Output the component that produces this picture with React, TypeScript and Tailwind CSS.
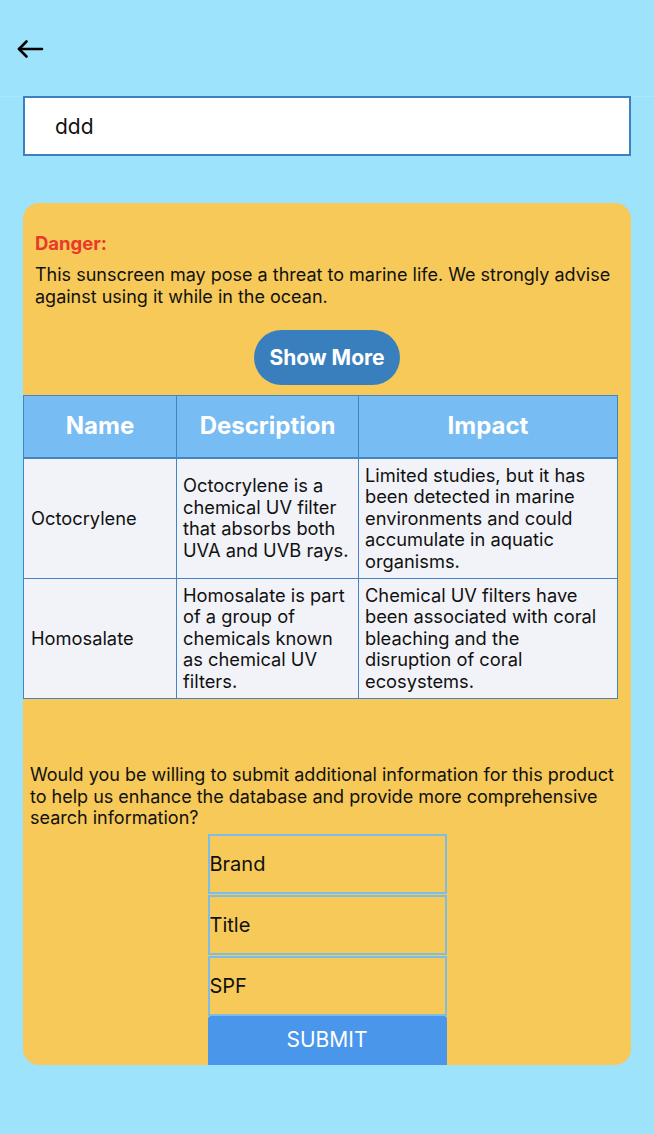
import { useState } from "react";

const rows = [
  {
    name: "Octocrylene",
    description: "Octocrylene is a chemical UV filter that absorbs both UVA and UVB rays.",
    impact:
      "Limited studies, but it has been detected in marine environments and could accumulate in aquatic organisms.",
  },
  {
    name: "Homosalate",
    description: "Homosalate is part of a group of chemicals known as chemical UV filters.",
    impact:
      "Chemical UV filters have been associated with coral bleaching and the disruption of coral ecosystems.",
  },
];

export default function App() {
  const [query, setQuery] = useState("ddd");

  return (
    <div className="min-h-[1134px] bg-[#9de3fb] font-['Inter',sans-serif] text-[#111]">
      {/* Header */}
      <div className="h-[97px] flex items-center pl-[17px] pt-[2px] border-b border-[#a9e8fd]">
        <button className="text-black">
          <svg width="27" height="20" viewBox="0 0 27 20" fill="none" stroke="currentColor" strokeWidth="2.6" strokeLinecap="round" strokeLinejoin="round">
            <path d="M25 10H2" />
            <path d="M9.5 2.5L2 10l7.5 7.5" />
          </svg>
        </button>
      </div>

      <div className="px-[23px]">
        <input
          value={query}
          onChange={(e) => setQuery(e.target.value)}
          className="w-[608px] h-[60px] -mt-px bg-white border-2 border-[#3d80c0] pl-[30px] text-[21px] outline-none"
        />

        {/* Card */}
        <div className="mt-[47px] w-[608px] bg-[#f6c958] rounded-[16px] overflow-hidden">
          <div className="px-[12px] pt-[30px]">
            <p className="text-[#e8392b] font-bold text-[18.5px] leading-[21px]">Danger:</p>
            <p className="mt-[10px] text-[18px] leading-[22px]">
              This sunscreen may pose a threat to marine life. We strongly advise against using it while in the ocean.
            </p>
          </div>

          <div className="flex justify-center mt-[22px]">
            <button className="w-[146px] h-[55px] rounded-full bg-[#3a7fbd] text-white font-bold text-[21px]">
              Show More
            </button>
          </div>

          <table className="mt-[10px] w-[594px] border-collapse table-fixed">
            <colgroup>
              <col className="w-[153px]" />
              <col className="w-[182px]" />
              <col className="w-[259px]" />
            </colgroup>
            <thead>
              <tr className="h-[62px] bg-[#77bcf3] text-white text-[24px] font-bold">
                <th className="border border-[#4384c2] border-b-2">Name</th>
                <th className="border border-[#4384c2] border-b-2">Description</th>
                <th className="border border-[#4384c2] border-b-2">Impact</th>
              </tr>
            </thead>
            <tbody>
              {rows.map((r, i) => (
                <tr key={r.name} className={`${i === 0 ? "h-[121px]" : "h-[120px]"} bg-[#f2f3f8] text-[18.3px] leading-[21.5px]`}>
                  <td className="border border-[#4384c2] px-[7px] align-middle">{r.name}</td>
                  <td className="border border-[#4384c2] pl-[6px] pr-[4px] align-middle">{r.description}</td>
                  <td className="border border-[#4384c2] pl-[6px] pr-[10px] align-middle">{r.impact}</td>
                </tr>
              ))}
            </tbody>
          </table>

          <p className="mt-[65px] px-[7px] text-[18px] leading-[21.5px]">
            Would you be willing to submit additional information for this product to help us enhance the database and
            provide more comprehensive search information?
          </p>

          <div className="mt-[5px] flex flex-col items-center">
            <input placeholder="Brand" className="w-[239px] h-[60px] mb-px border-2 border-[#7bbde6] bg-transparent pl-0 text-[20px] placeholder:text-[#111] outline-none" />
            <input placeholder="Title" className="w-[239px] h-[60px] mb-px border-2 border-[#7bbde6] bg-transparent pl-0 text-[20px] placeholder:text-[#111] outline-none" />
            <input placeholder="SPF" className="w-[239px] h-[60px] border-2 border-[#7bbde6] bg-transparent pl-0 text-[20px] placeholder:text-[#111] outline-none" />
            <button className="w-[239px] h-[49px] bg-[#4a96ea] rounded-t-[3px] text-white text-[21px]">SUBMIT</button>
          </div>
        </div>
      </div>
    </div>
  );
}
